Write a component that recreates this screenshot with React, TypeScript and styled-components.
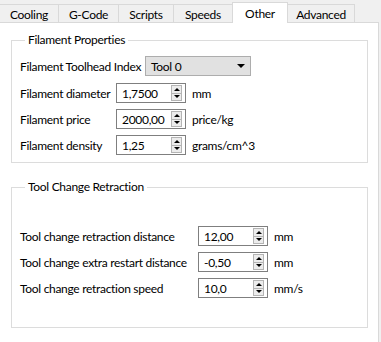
import React from "react"
import styled, { createGlobalStyle } from "styled-components"

const GlobalStyle = createGlobalStyle`
  body {
    margin: 0;
    background: #f0f0f0;
  }
`

const Window = styled.div`
  width: 381px;
  height: 342px;
  overflow: hidden;
  background: #f0f0f0;
  font-family: Lato, "Liberation Sans", sans-serif;
  font-size: 12px;
  letter-spacing: -0.3px;
  color: #000;
  display: flex;
  flex-direction: column;
`

const TabBar = styled.div`
  display: flex;
  align-items: flex-end;
  height: 22px;
  flex-shrink: 0;
  position: relative;
  z-index: 1;
`

const Tab = styled.div<{ $active?: boolean; $w: number }>`
  box-sizing: border-box;
  width: ${(p) => p.$w}px;
  height: ${(p) => (p.$active ? 21 : 18)}px;
  margin-left: -1px;
  margin-bottom: ${(p) => (p.$active ? -1 : 0)}px;
  border: 1px solid #d9d9d9;
  border-bottom: none;
  background: ${(p) => (p.$active ? "#ffffff" : "#f0f0f0")};
  display: flex;
  align-items: center;
  justify-content: center;
  padding-top: ${(p) => (p.$active ? 0 : 1)}px;
  position: relative;
  z-index: ${(p) => (p.$active ? 2 : 1)};
`

const Panel = styled.div`
  box-sizing: border-box;
  width: 379px;
  flex: 1;
  background: #fff;
  border-top: 1px solid #d9d9d9;
  border-right: 1px solid #d9d9d9;
  padding: 10px 0 0 11px;
  display: flex;
  flex-direction: column;
  gap: 17px;
`

const GroupBox = styled.fieldset<{ $pt: number; $pb: number }>`
  box-sizing: border-box;
  width: 357px;
  margin: 0;
  min-width: 0;
  border: 1px solid #dcdcdc;
  padding: ${(p) => p.$pt}px 0 ${(p) => p.$pb}px 8px;
  display: flex;
  flex-direction: column;
  gap: 6px;
`

const GroupTitle = styled.legend`
  margin-left: 5px;
  padding: 0 3px;
  line-height: 14px;
`

const ComboRow = styled.div`
  display: grid;
  grid-template-columns: 125px 106px;
  align-items: center;
  height: 20px;
  margin-bottom: 1px;
`

const Combo = styled.div`
  box-sizing: border-box;
  height: 20px;
  background: #e1e1e1;
  border: 1px solid #adadad;
  display: flex;
  align-items: center;
  justify-content: space-between;
  padding: 0 5px 0 5px;
`

const ComboArrow = styled.span`
  width: 0;
  height: 0;
  border-left: 4px solid transparent;
  border-right: 4px solid transparent;
  border-top: 4px solid #000;
`

const FieldRow = styled.div<{ $label: number }>`
  display: grid;
  grid-template-columns: ${(p) => p.$label}px 70px auto;
  column-gap: 6px;
  align-items: center;
  height: 20px;
`

const Label = styled.span`
  white-space: nowrap;
`

const SpinBox = styled.div`
  box-sizing: border-box;
  height: 20px;
  border: 1px solid #7f7f7f;
  background: #fff;
  display: flex;
  align-items: center;
  padding: 0 3px 0 5px;
`

const SpinValue = styled.span`
  flex: 1;
`

const SpinButtons = styled.div`
  box-sizing: border-box;
  width: 11px;
  height: 16px;
  border: 1px solid #b4b4b4;
  background: #ececec;
  display: flex;
  flex-direction: column;
`

const SpinHalf = styled.div<{ $down?: boolean }>`
  flex: 1;
  display: flex;
  align-items: center;
  justify-content: center;
  border-top: ${(p) => (p.$down ? "1px solid #b4b4b4" : "none")};
  &::after {
    content: "";
    width: 0;
    height: 0;
    border-left: 3px solid transparent;
    border-right: 3px solid transparent;
    ${(p) =>
      p.$down ? "border-top: 3px solid #000;" : "border-bottom: 3px solid #000;"}
  }
`

const Unit = styled.span`
  white-space: nowrap;
`

const tabs = [
  { name: "Cooling", w: 60 },
  { name: "G-Code", w: 61 },
  { name: "Scripts", w: 56 },
  { name: "Speeds", w: 60 },
  { name: "Other", w: 56, active: true },
  { name: "Advanced", w: 68 },
]

const filament = [
  { label: "Filament diameter", value: "1,7500", unit: "mm" },
  { label: "Filament price", value: "2000,00", unit: "price/kg" },
  { label: "Filament density", value: "1,25", unit: "grams/cm^3" },
]

const toolChange = [
  { label: "Tool change retraction distance", value: "12,00", unit: "mm" },
  { label: "Tool change extra restart distance", value: "-0,50", unit: "mm" },
  { label: "Tool change retraction speed", value: "10,0", unit: "mm/s" },
]

const Spin = ({ value }: { value: string }) => (
  <SpinBox>
    <SpinValue>{value}</SpinValue>
    <SpinButtons>
      <SpinHalf />
      <SpinHalf $down />
    </SpinButtons>
  </SpinBox>
)

const App = () => {
  return (
    <Window>
      <GlobalStyle />
      <TabBar>
        {tabs.map((t) => (
          <Tab key={t.name} $w={t.w} $active={t.active}>
            {t.name}
          </Tab>
        ))}
      </TabBar>
      <Panel>
        <GroupBox $pt={9} $pb={7}>
          <GroupTitle>Filament Properties</GroupTitle>
          <ComboRow>
            <Label>Filament Toolhead Index</Label>
            <Combo>
              <span>Tool 0</span>
              <ComboArrow />
            </Combo>
          </ComboRow>
          {filament.map((f) => (
            <FieldRow key={f.label} $label={90}>
              <Label>{f.label}</Label>
              <Spin value={f.value} />
              <Unit>{f.unit}</Unit>
            </FieldRow>
          ))}
        </GroupBox>
        <GroupBox $pt={32} $pb={29}>
          <GroupTitle>Tool Change Retraction</GroupTitle>
          {toolChange.map((f) => (
            <FieldRow key={f.label} $label={172}>
              <Label>{f.label}</Label>
              <Spin value={f.value} />
              <Unit>{f.unit}</Unit>
            </FieldRow>
          ))}
        </GroupBox>
      </Panel>
    </Window>
  )
}

export default App
